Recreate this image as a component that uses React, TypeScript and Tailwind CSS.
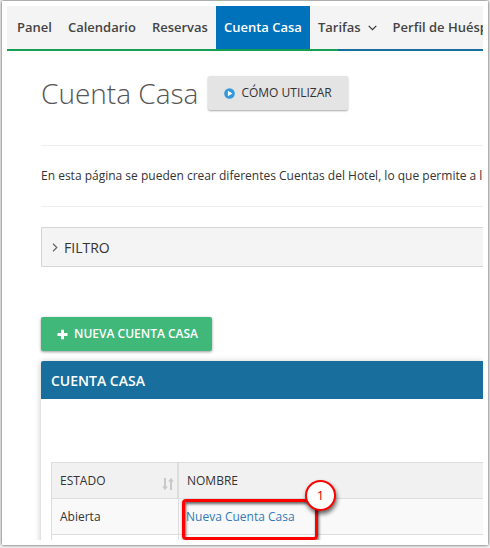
import React from 'react'

const navItem = 'flex h-full shrink-0 items-center px-2 text-[13px] whitespace-nowrap'

function NavLink({ children, active }: { children: React.ReactNode; active?: boolean }) {
  return (
    <a href="#" className={`${navItem} ${active ? 'bg-[#0072bc] font-semibold text-white' : 'font-semibold text-[#444]'}`}>
      {children}
    </a>
  )
}

function SortIcon() {
  return (
    <svg width="12" height="14" viewBox="0 0 12 14" fill="#c8c8c8" aria-hidden="true">
      <path d="M2 1h2v8.5h2L3 13 0 9.500h2z" />
      <path d="M8 13h2V4.500h2L9 1 6 4.500h2z" />
    </svg>
  )
}

function Callout() {
  return (
    <div className="pointer-events-none absolute top-0 left-[3px] h-[41px] w-[136px] rounded-[4px] border-3 border-[#f00] shadow-[1px_2px_3px_rgba(0,0,0,0.6),inset_1px_2px_3px_rgba(0,0,0,0.6)]">
      <span className="absolute -top-[22px] -right-[21px] flex size-[31px] items-center justify-center rounded-full border-2 border-[#f00] bg-white text-[13px] text-[#e00000] shadow-[1px_3px_4px_rgba(0,0,0,0.6)]">
        1
      </span>
    </div>
  )
}

export default function App() {
  return (
    <div className="h-screen bg-[#f4f4f4] px-0.5 pt-px pb-[3px] font-['Open_Sans',sans-serif] text-[#333]">
      <div className="h-full bg-white p-[5px] shadow-[0_0_3px_rgba(0,0,0,0.75)]">
        <div className="h-full overflow-hidden">
          <nav className="bg-[#f4f4f4]">
            <div className="flex h-[43px] overflow-hidden pl-0.5">
              <NavLink>Panel</NavLink>
              <NavLink>Calendario</NavLink>
              <NavLink>Reservas</NavLink>
              <NavLink active>Cuenta Casa</NavLink>
              <NavLink>
                Tarifas
                <svg className="ml-[7px]" width="9" height="6" viewBox="0 0 9 6" fill="none" stroke="#333" strokeWidth="1.200" aria-hidden="true">
                  <path d="M.7.800 4.500 4.600 8.300.800" />
                </svg>
              </NavLink>
              <NavLink>Perfil de Huésp</NavLink>
            </div>
            <div className="flex h-0.5 bg-[#186f9e]">
              <div className="w-[331px] bg-[#169f53]" />
            </div>
          </nav>

          <main className="pl-[34px]">
            <header className="flex items-center gap-2.5 pt-[21px]">
              <h1 className="text-[28px] leading-[42px] font-light whitespace-nowrap text-[#555]">Cuenta Casa</h1>
              <button className="flex h-[34px] items-center rounded-[2px] bg-[#e4e4e4] px-4 text-[12px] font-medium whitespace-nowrap shadow-[0_1px_2px_rgba(0,0,0,0.35)]">
                <svg className="mr-1.5" width="11" height="11" viewBox="0 0 11 11" aria-hidden="true">
                  <circle cx="5.500" cy="5.500" r="5.300" fill="#3598dc" />
                  <path d="M3.900 2.800v5.400L8.400 5.500z" fill="#fff" />
                </svg>
                CÓMO UTILIZAR
              </button>
            </header>

            <div className="mt-[31px] flex h-[62px] items-center overflow-hidden border-y border-[#eee]">
              <p className="text-[12px] whitespace-nowrap">
                En esta página se pueden crear diferentes Cuentas del Hotel, lo que permite a l
              </p>
            </div>

            <button className="mt-5 flex h-10 w-full items-center rounded-l-[2px] border border-r-0 border-[#d6d6d6] bg-[#f4f4f4] px-2.5 text-[14px] font-medium">
              <svg className="mr-1.5" width="6" height="9" viewBox="0 0 6 9" fill="none" stroke="#666" strokeWidth="1.200" aria-hidden="true">
                <path d="M1 .8 4.800 4.500 1 8.200" />
              </svg>
              FILTRO
            </button>

            <button className="mt-[50px] flex h-[34px] items-center rounded-[2px] bg-[#3fb87a] pr-3.5 pl-4 text-[12px] font-semibold whitespace-nowrap text-white shadow-[0_1px_3px_rgba(0,0,0,0.4)]">
              <svg className="mr-1.5" width="11" height="11" viewBox="0 0 11 11" fill="#fff" aria-hidden="true">
                <path d="M4 .8h3V4h3.500v3H7v3.200H4V7H.5V4H4z" />
              </svg>
              NUEVA CUENTA CASA
            </button>

            <section className="mt-2.5 rounded-tl-[2px] shadow-[0_1px_6px_rgba(0,0,0,0.25)]">
              <h2 className="flex h-[38px] items-center rounded-tl-[2px] bg-[#186f9e] px-2.5 text-[14px] font-semibold text-white">
                CUENTA CASA
              </h2>
              <div className="bg-white pt-[63px] pl-2.5">
                <table className="w-full table-fixed border-separate border-spacing-0 border-t border-l border-[#ddd] text-left text-[12px]">
                  <thead>
                    <tr className="h-9 bg-[#f1f1f1]">
                      <th className="w-[127px] border-r-2 border-b border-[#ddd] pr-[3px] pl-2 font-medium">
                        <div className="flex items-center justify-between">
                          ESTADO
                          <span className="pt-1.5">
                            <SortIcon />
                          </span>
                        </div>
                      </th>
                      <th className="border-b border-[#ddd] px-2 font-medium">NOMBRE</th>
                    </tr>
                  </thead>
                  <tbody>
                    <tr className="h-9 bg-[#f9f9f9]">
                      <td className="border-r border-b border-[#ddd] px-2">Abierta</td>
                      <td className="relative border-b border-[#ddd] px-[7px]">
                        <a href="#" className="text-[#337ab7]">Nueva Cuenta Casa</a>
                        <Callout />
                      </td>
                    </tr>
                    <tr className="h-9">
                      <td className="border-r border-[#ddd] px-2" />
                      <td className="px-[7px]" />
                    </tr>
                  </tbody>
                </table>
              </div>
            </section>
          </main>
        </div>
      </div>
    </div>
  )
}
